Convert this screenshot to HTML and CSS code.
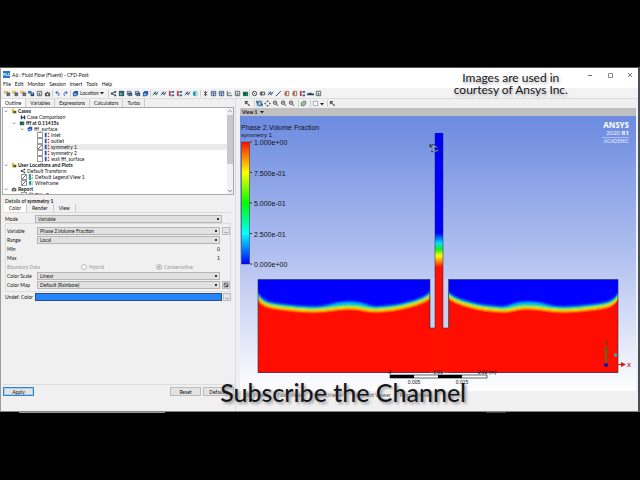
FILE: index.html
```html
<!DOCTYPE html>
<html lang="en">
<head>
<meta charset="utf-8">
<title>A6 : Fluid Flow (Fluent) - CFD-Post</title>
<link rel="stylesheet" href="styles.css">
</head>
<body>
<svg class="defs" aria-hidden="true">
  <symbol id="folder" viewBox="0 0 8 8"><path d="M1 1h3v2h3v4H1z" fill="#e5c34d"/><path d="M3 4h4v3H3z" fill="#4b5d38"/></symbol>
  <symbol id="save" viewBox="0 0 8 8"><path d="M0 1h5v3H0z" fill="#e3c158"/><path d="M3 3h4v4H3z" fill="#33518f"/><path d="M4 5h3v1H4z" fill="#e8a23c"/></symbol>
  <symbol id="copy" viewBox="0 0 8 8"><path d="M0 1h4v3H0z" fill="#3d79a8"/><path d="M3 3h4v4H3z" fill="#23406f"/><path d="M4 4h2v1H4z" fill="#dfe8f2"/></symbol>
  <symbol id="page" viewBox="0 0 8 8"><path d="M1.500 1.500h5v5h-5z" fill="#fff" stroke="#4e5860"/><path d="M3 3h2v3H3z" fill="#587a6a"/></symbol>
  <symbol id="camera" viewBox="0 0 8 8"><path d="M1 3h6v4H1zM3 2h2v1H3z" fill="#555"/><circle cx="4" cy="5" r="1" fill="#fff"/></symbol>
  <symbol id="undo" viewBox="0 0 8 8"><path d="M2 3h3q2 1 0 4M4 1L2 3l2 2" fill="none" stroke="#3464b8"/></symbol>
  <symbol id="redo" viewBox="0 0 8 8"><path d="M6 3H3Q1 4 3 7M4 1l2 2-2 2" fill="none" stroke="#3464b8"/></symbol>
  <symbol id="cube" viewBox="0 0 8 8"><path d="M1 3l2-2h4v4L5 7H1z" fill="#2458b5"/><path d="M2 4h3v2H2z" fill="#a9c4ef"/></symbol>
  <symbol id="share" viewBox="0 0 8 8"><path d="M6 2L2 4l4 2" fill="none" stroke="#28405a"/><path d="M1 3h2v2H1zM5 1h2v2H5zM5 5h2v2H5z" fill="#28405a"/></symbol>
  <symbol id="plane" viewBox="0 0 8 8"><path d="M1 1h6v6H1z" fill="#2a536e"/><path d="M2 3h3v3H2z" fill="#5cb596"/></symbol>
  <symbol id="layers" viewBox="0 0 8 8"><path d="M1 1h5v5H1z" fill="#4a72ae"/><path d="M3 3h4v4H3z" fill="#344759"/><path d="M2 2h3v1H2zM4 5h2v1H4z" fill="#dce7ef"/></symbol>
  <symbol id="vector" viewBox="0 0 8 8"><path d="M1 6l3-4 1 3 2-3M2 3l3 3" fill="none" stroke="#25466f"/></symbol>
  <symbol id="chart" viewBox="0 0 8 8"><path d="M1 1h2v6H1z" fill="#bb3b45"/><path d="M4 1h3v2H4zM4 5h3v2H4z" fill="#356291"/></symbol>
  <symbol id="ball" viewBox="0 0 8 8"><circle cx="4" cy="4" r="3" fill="#1b9999"/><path d="M4 1a3 3 0 0 1 0 6z" fill="#b9e5df"/></symbol>
  <symbol id="cross" viewBox="0 0 8 8"><path d="M2 2l4 4M6 2L2 6M4 1v6" stroke="#454545" fill="none"/></symbol>
  <symbol id="grid" viewBox="0 0 8 8"><path d="M1.500 1.500h5v5h-5zM1 3.500h6M4 3v4" stroke="#455d88" fill="#dce5f5"/></symbol>
  <symbol id="axes" viewBox="0 0 8 8"><path d="M1.500 1v5.500H7M2 5l2-2 2 1" stroke="#475160" fill="none"/></symbol>
  <symbol id="legend" viewBox="0 0 8 8"><path d="M1 0h3v8H1z" fill="#3f9a8b"/><path d="M5 1h2v1H5zM5 4h1v3H5z" fill="#567"/></symbol>
  <symbol id="picture" viewBox="0 0 8 8"><path d="M1 2h6v5H1z" fill="#1f7850"/><path d="M2 3h2v2H2z" fill="#143d45"/></symbol>
  <symbol id="clock" viewBox="0 0 8 8"><circle cx="4" cy="4" r="2.500" fill="#fff" stroke="#333"/><path d="M3 3l2 2" stroke="#333"/></symbol>
  <symbol id="film" viewBox="0 0 8 8"><path d="M1.500 2.500h5v3h-5z" fill="#fff" stroke="#333"/><path d="M3 2v4" stroke="#333"/></symbol>
  <symbol id="pen" viewBox="0 0 8 8"><path d="M1 7l5-5 1-1" stroke="#333" fill="none"/></symbol>
  <symbol id="probe" viewBox="0 0 8 8"><path d="M2.500 1.500h4v5h-4z" fill="#fff" stroke="#83684c"/><path d="M1 5l3-3 1 3z" fill="#ba4031"/></symbol>
  <symbol id="car" viewBox="0 0 8 8"><path d="M0 4h2V3h3v1h3v2H0z" fill="#283d65"/></symbol>
  <symbol id="pair" viewBox="0 0 8 8"><path d="M1 2h2v2h2V2h2v5H5V5H3v2H1z" fill="#263554"/></symbol>
  <symbol id="cursor" viewBox="0 0 8 8"><path d="M1 1h4L3.500 3 7 6 6 7 3 4 1 5z" fill="#555"/></symbol>
  <symbol id="rotate" viewBox="0 0 8 8"><path d="M6.500 3Q4 0 1.500 3M1 1v2.500h2M1.500 5Q4 8 6.500 5M7 7V4.500H5" stroke="#183750" fill="none"/></symbol>
  <symbol id="move" viewBox="0 0 8 8"><path d="M4 0l1.500 2h-3zM4 8l1.500-2h-3zM0 4l2-1.500v3zM8 4L6 2.500v3z" fill="#444"/></symbol>
  <symbol id="zoom" viewBox="0 0 8 8"><circle cx="3.500" cy="3" r="2" fill="#fff" stroke="#444"/><path d="M5 4.500L7 7M2.500 3h2" stroke="#444"/></symbol>
  <symbol id="box" viewBox="0 0 8 8"><path d="M1.500 3.500l2-2h3v3l-2 2h-3z" fill="#9fc1a4" stroke="#4b7d5a"/></symbol>
  <symbol id="empty" viewBox="0 0 8 8"><path d="M1.500 1.500h5v5h-5z" fill="#fff" stroke="#9a9cb4"/></symbol>
  <symbol id="bound" viewBox="0 0 8 8"><path d="M1 1h2.500v6H1z" fill="#2f56a3"/><path d="M5 1h2v2H5zM5 5h2v2H5z" fill="#b84a58"/></symbol>
  <symbol id="down" viewBox="0 0 8 8"><path d="M0 2h8L4 7z" fill="#222"/></symbol>
  <symbol id="chev" viewBox="0 0 8 8"><path d="M1 3l3 3 3-3" fill="none" stroke="#444"/></symbol>
  <symbol id="chevup" viewBox="0 0 8 8"><path d="M1 5l3-3 3 3" fill="none" stroke="#666"/></symbol>
</svg>

<main class="window">
  <header class="titlebar">
    <span class="logo">FLU</span>
    <h1>A6 : Fluid Flow (Fluent) - CFD-Post</h1>
    <div class="winbtns">
      <button aria-label="Minimize"><svg viewBox="0 0 8 8"><path d="M2 4.500h4" stroke="#777"/></svg></button>
      <button aria-label="Maximize"><svg viewBox="0 0 8 8"><path d="M2.500 2.500h4v4h-4z" fill="none" stroke="#888"/></svg></button>
      <button aria-label="Close"><svg viewBox="0 0 8 8"><path d="M2 2l4 4M6 2L2 6" stroke="#777"/></svg></button>
    </div>
  </header>
  <nav class="menu">
    <a href="#">File</a><a href="#">Edit</a><a href="#">Monitor</a><a href="#">Session</a><a href="#">Insert</a><a href="#">Tools</a><a href="#">Help</a>
  </nav>
  <div class="toolbar">
    <div class="tools"><svg><use href="#save"/></svg><svg><use href="#save"/></svg><svg><use href="#save"/></svg><svg><use href="#copy"/></svg><svg><use href="#page"/></svg><svg><use href="#camera"/></svg></div>
    <div class="tools"><svg><use href="#undo"/></svg><svg><use href="#redo"/></svg></div>
    <button class="location"><svg><use href="#cube"/></svg>Location<svg class="arrow"><use href="#down"/></svg></button>
    <div class="tools"><svg><use href="#share"/></svg><svg><use href="#plane"/></svg><svg><use href="#layers"/></svg><svg><use href="#layers"/></svg><svg><use href="#cube"/></svg></div>
    <div class="tools"><svg><use href="#vector"/></svg><svg><use href="#vector"/></svg><svg><use href="#chart"/></svg><svg><use href="#chart"/></svg><svg><use href="#vector"/></svg><svg><use href="#ball"/></svg></div>
    <div class="tools"><svg><use href="#cross"/></svg><svg><use href="#grid"/></svg><svg><use href="#grid"/></svg><svg><use href="#axes"/></svg><svg><use href="#page"/></svg><svg><use href="#picture"/></svg></div>
    <div class="tools"><svg><use href="#clock"/></svg><svg><use href="#film"/></svg><svg><use href="#vector"/></svg><svg><use href="#pen"/></svg><svg><use href="#probe"/></svg><svg><use href="#probe"/></svg><svg><use href="#chart"/></svg><svg><use href="#car"/></svg><svg><use href="#page"/></svg></div>
  </div>

  <div class="work">
    <section class="side">
      <div class="tabs maintabs">
        <button class="on">Outline</button><button>Variables</button><button>Expressions</button><button>Calculators</button><button>Turbo</button>
      </div>
      <div class="treebox">
        <ul class="tree">
          <li class="l0 bold"><svg><use href="#chev"/></svg><svg class="ic"><use href="#folder"/></svg>Cases</li>
          <li class="l1"><svg class="ic"><use href="#pair"/></svg>Case Comparison</li>
          <li class="l2 bold"><svg><use href="#chev"/></svg><svg class="ic"><use href="#picture"/></svg>fff at 0.11415s</li>
          <li class="l3"><svg><use href="#chev"/></svg><svg class="ic"><use href="#cube"/></svg>fff_surface</li>
          <li class="l4"><label><input type="checkbox"><svg><use href="#bound"/></svg>inlet</label></li>
          <li class="l4"><label><input type="checkbox"><svg><use href="#bound"/></svg>outlet</label></li>
          <li class="l4 sel"><label><input type="checkbox" checked><svg><use href="#bound"/></svg>symmetry 1</label></li>
          <li class="l4"><label><input type="checkbox"><svg><use href="#bound"/></svg>symmetry 2</label></li>
          <li class="l4"><label><input type="checkbox"><svg><use href="#bound"/></svg>wall fff_surface</label></li>
          <li class="l0 bold"><svg><use href="#chev"/></svg><svg class="ic"><use href="#folder"/></svg>User Locations and Plots</li>
          <li class="l1"><svg class="ic"><use href="#share"/></svg>Default Transform</li>
          <li class="l1"><label><input type="checkbox" checked><svg><use href="#legend"/></svg>Default Legend View 1</label></li>
          <li class="l1"><label><input type="checkbox" checked><svg><use href="#ball"/></svg>Wireframe</label></li>
          <li class="l0 bold"><svg><use href="#chev"/></svg><svg class="ic"><use href="#camera"/></svg>Report</li>
          <li class="l1"><label><input type="checkbox"><svg><use href="#page"/></svg>Title Page</label></li>
        </ul>
        <div class="scroll"><svg><use href="#chevup"/></svg><i></i><svg><use href="#chev"/></svg></div>
      </div>
      <h2>Details of <b>symmetry 1</b></h2>
      <div class="tabs subtabs"><button class="on">Color</button><button>Render</button><button>View</button></div>
      <form class="details">
        <div class="row outer"><label for="mode">Mode</label><select id="mode"><option>Variable</option></select></div>
        <div class="group">
          <div class="row"><label for="var">Variable</label><select id="var"><option>Phase 2.Volume Fraction</option></select><button type="button">...</button></div>
          <div class="row"><label for="range">Range</label><select id="range"><option>Local</option></select></div>
          <div class="row"><span>Min</span><output>0</output></div>
          <div class="row"><span>Max</span><output>1</output></div>
          <div class="row off"><span>Boundary Data</span><div class="radios"><label><input type="radio" name="b" disabled>Hybrid</label><label><input type="radio" name="b" checked disabled>Conservative</label></div></div>
          <div class="row"><label for="scale">Color Scale</label><select id="scale"><option>Linear</option></select></div>
          <div class="row"><label for="map">Color Map</label><select id="map"><option>Default (Rainbow)</option></select><button type="button" class="edit" aria-label="Edit color map"><svg viewBox="0 0 8 8"><path d="M1.500 1.500h5v5h-5zM2 2l4 4M4 6h2V4" fill="none" stroke="#333"/></svg></button></div>
        </div>
        <div class="row outer"><span>Undef. Color</span><button type="button" class="swatch" aria-label="Undefined color"></button><button type="button">...</button></div>
      </form>
      <footer class="actions"><button class="primary">Apply</button><button>Reset</button><button>Defaults</button></footer>
    </section>

    <section class="viewer">
      <div class="viewtools">
        <div class="tools"><svg><use href="#cursor"/></svg></div>
        <div class="tools"><svg class="active"><use href="#rotate"/></svg><svg><use href="#move"/></svg><svg><use href="#zoom"/></svg><svg><use href="#zoom"/></svg><svg><use href="#zoom"/></svg></div>
        <div class="tools"><svg><use href="#box"/></svg></div>
        <div class="tools"><svg><use href="#empty"/></svg><svg class="arrow"><use href="#down"/></svg></div>
        <div class="tools"><svg><use href="#cursor"/></svg></div>
      </div>
      <button class="viewname">View 1 <svg class="arrow"><use href="#down"/></svg></button>
      <svg class="scene" viewBox="0 0 396 275" role="img" aria-label="Phase 2 volume fraction on symmetry 1">
        <defs>
          <linearGradient id="sky" x2="0" y2="1"><stop offset="0" stop-color="#6b8be0"/><stop offset=".5" stop-color="#b0bfef"/><stop offset="1" stop-color="#fff"/></linearGradient>
          <linearGradient id="rainbow" x2="0" y2="1"><stop offset="0" stop-color="#f10"/><stop offset=".25" stop-color="#ff0"/><stop offset=".5" stop-color="#0f0"/><stop offset=".75" stop-color="#0ff"/><stop offset="1" stop-color="#00f"/></linearGradient>
          <linearGradient id="col" gradientUnits="userSpaceOnUse" x1="0" y1="117" x2="0" y2="151"><stop offset="0" stop-color="#00f"/><stop offset=".3" stop-color="#00e5f5"/><stop offset=".48" stop-color="#1bea20"/><stop offset=".67" stop-color="#ff0"/><stop offset="1" stop-color="#f10"/></linearGradient>
          <clipPath id="clip"><path d="M0 0h172v93H0z"/></clipPath>
          <filter id="soft" x="-5%" y="-5%" width="110%" height="110%"><feGaussianBlur stdDeviation=".8"/></filter>
          <path id="wave" d="M-5 8L0 16C3 22 10 25 20 26C35 28 45 29 57 29C70 29 78 26 91 26C104 26 108 29 118 29C135 28 145 26 155 23C165 20 170 17 172 15L177 8V110H-5z"/>
          <g id="pool">
            <path d="M0 0h172v93H0z" fill="#00f"/>
            <g clip-path="url(#clip)"><g filter="url(#soft)">
              <path d="M-5 6L0 13C3 20 10 23 20 24C35 26 45 27 57 27C70 27 76 22 91 22C106 22 108 26 118 27C135 26 145 24 155 21C165 18 170 15 172 12L177 6V110H-5z" fill="#0bf"/>
              <use href="#wave" y="-1" fill="#0d8"/>
              <use href="#wave" y="0" fill="#1d1"/>
              <use href="#wave" y="1" fill="#fe0"/>
              <use href="#wave" y="3" fill="#f10"/>
            </g></g>
            <path d="M0 93V0h172v49" fill="none" stroke="#234" stroke-width=".6"/>
          </g>
        </defs>
        <rect width="396" height="275" fill="url(#sky)"/>
        <path d="M18 212h360v44.500H18z" fill="#f10"/>
        <use href="#pool" x="18" y="163.500"/>
        <use href="#pool" transform="translate(378 163.500) scale(-.985 1)"/>
        <path d="M190 163h5v49h-5zM203 212v-49h5.500v49z" fill="#cbd1ef"/>
        <path d="M189.500 256V212h20v44z" fill="#f10"/>
        <path d="M195 17h8v196h-8z" fill="url(#col)"/>
        <path d="M18 256.500h360M190 163v49h5M203 212h5.500v-49" fill="none" stroke="#334" stroke-width=".6"/>
        <path d="M195 17v195M203 17v195" stroke="#225" stroke-width=".5"/>
        <text class="t8" x="1" y="14">Phase 2.Volume Fraction</text>
        <text class="t7" x="1" y="21">symmetry 1</text>
        <path d="M1.500 26h8v122h-8z" fill="url(#rainbow)" stroke="#333" stroke-width=".5"/>
        <path d="M10 26h2M10 56.500h2M10 87h2M10 117.500h2M10 148h2" stroke="#333"/>
        <g class="t8"><text x="14" y="29">1.000e+00</text><text x="14" y="60">7.500e-01</text><text x="14" y="90">5.000e-01</text><text x="14" y="121">2.500e-01</text><text x="14" y="151">0.000e+00</text></g>
        <g fill="none" stroke="#222" stroke-width=".9"><path d="M190 30q4-3 7 1M190 28v3h3M198 34q-3 3-7 1M199 37v-3h-3"/><path d="M192 31q4-2 5 1M193 35q3 1 5-1" stroke="#ddd" stroke-width=".7"/></g>
        <g text-anchor="end"><text class="brand" x="389" y="12">ANSYS</text><text class="release" x="389" y="19">2020 <tspan font-weight="700">R1</tspan></text><text class="academic" x="389" y="27">ACADEMIC</text></g>
        <path d="M362 21.500h27" stroke="#dfe7ff" stroke-width=".5"/>
        <path d="M150 259h97v3h-97z" fill="#fff" stroke="#000" stroke-width=".6"/><path d="M150 259h24v3h-24zM198 259h24v3h-24z"/>
        <g class="t5" text-anchor="middle"><text x="150" y="258">0</text><text x="198" y="258">0.01</text><text x="247" y="258">0.02 (m)</text><text x="174" y="268">0.005</text><text x="222" y="268">0.015</text></g>
        <path d="M366 248v-17" stroke="#577116" stroke-width="2"/><path d="M368 248.500h16" stroke="#e21b14"/><path d="M381 246l5 2.500-5 2.500z" fill="#d91820"/><circle cx="366" cy="249" r="2" fill="#1511a8"/><circle cx="366" cy="233" r="1.500" fill="#207f22"/><circle cx="375.500" cy="239" r="1.800" fill="#37aaa8"/>
        <text class="axis x" x="387" y="251">X</text><text class="axis y" x="364" y="229">Y</text>
      </svg>
      <div class="bottomtabs"><button>3D Viewer</button><button>Table Viewer</button><button>Chart Viewer</button><button>Comment Viewer</button><button>Report Viewer</button></div>
    </section>
  </div>
  <p class="credit">Images are used in<br>courtesy of Ansys Inc.</p>
  <p class="subscribe">Subscribe the Channel</p>
</main>
<div class="taskbar"><i></i><i></i></div>
</body>
</html>
```
FILE: styles.css
```css
* { box-sizing: border-box; }
body { margin: 0; padding-top: 67px; background: #000; color: #111; font: 5px/6px Lato, "Open Sans", sans-serif; }
button, select, input { margin: 0; padding: 0; font: inherit; color: inherit; border: 0; border-radius: 0; background: none; }
h1, h2, p, ul { margin: 0; padding: 0; font: inherit; }
a { color: inherit; text-decoration: none; }
svg { display: block; flex: none; width: 7px; height: 7px; }
.defs { position: absolute; width: 0; height: 0; }
.arrow { width: 4px; height: 4px; }

.window { position: relative; background: #f0f0f0; border: 1px solid #888; border-width: 1px 2px 1px 1px; border-color: #555 #46505c #8a8085 #999; }
.titlebar { display: flex; align-items: center; gap: 2px; height: 13px; padding-left: 2px; background: #fff; }
.logo { width: 7px; height: 7px; background: #2877c9; color: #fff; font: bold 4px/7px "Liberation Sans", sans-serif; text-align: center; }
.winbtns { display: flex; gap: 12px; margin-left: auto; padding-right: 4px; }
.winbtns svg { width: 8px; height: 8px; }
.menu { display: flex; gap: 4px; height: 7px; padding-left: 2px; background: #fff; }
.toolbar { display: flex; align-items: center; height: 11px; padding-left: 3px; background: #f3f3f3; border-bottom: 1px solid #ddd; }
.tools { display: flex; align-items: center; gap: 1px; }
.tools + .tools, .location, .location + .tools { border-left: 1px solid #ccc; padding-left: 1px; margin-left: 1px; }
.toolbar > .tools:last-child { margin-left: 0; }
.location { display: flex; align-items: center; gap: 1px; padding-right: 3px; }

.work { display: grid; grid-template-columns: 235fr 402fr; }
.side { display: flex; flex-direction: column; min-width: 0; border-right: 1px solid #d5dde8; }
.tabs { display: flex; height: 8px; }
.tabs button { padding: 0 5px; border-right: 1px solid #ccc; }
.maintabs button { padding: 0 4px; }
.tabs .on { background: #fff; }
.treebox { display: flex; height: 88px; margin: 0 1px; background: #fff; border: 1px solid #aaa; overflow: hidden; }
.tree { flex: 1; list-style: none; }
.tree li { display: flex; align-items: center; height: 6px; white-space: nowrap; }
.tree svg { width: 6px; height: 6px; }
.tree svg:first-child:not(.ic) { width: 4px; height: 4px; }
.tree .ic { margin: 0 1px 0 3px; }
.tree label { display: flex; align-items: center; gap: 1px; }
.tree .l0 { padding-left: 1px; }
.tree .l1 { padding-left: 14px; }
.tree .l1 > label { padding-left: 4px; }
.tree .l2 { padding-left: 9px; }
.tree .l3 { padding-left: 17px; }
.tree .l4 { margin-left: 34px; }
.tree .sel { background: #eaeaea; }
.tree .bold { font-weight: 700; }
input { appearance: none; width: 6px; height: 6px; background: #fff; border: 1px solid #999; }
input[type=checkbox]:checked { background: linear-gradient(135deg, #fff 45%, #666 45%, #666 60%, #fff 60%); }
input[type=radio] { border-radius: 50%; border-color: #bbb; }
input[type=radio]:checked { background: #999; box-shadow: inset 0 0 0 1px #fff; }
.scroll { display: flex; flex-direction: column; width: 6px; padding: 1px 0; background: #f0f0f0; }
.scroll svg, .scroll svg:first-child { width: 6px; height: 5px; }
.scroll i { height: 49px; margin: 1px 0 auto; background: #c9c9c9; }
h2 { height: 9px; padding: 3px 4px 0; }
.subtabs { margin: 0 3px; border-bottom: 1px solid #ddd; height: 9px; }

.details { padding: 1px 4px 0; }
.row { display: grid; grid-template-columns: 28px 1fr 8px; align-items: center; column-gap: 2px; height: 9px; white-space: nowrap; }
.row.outer { padding: 0; column-gap: 1px; grid-template-columns: 29px 1fr 8px; }
.group { padding: 2px 0 2px 1px; border: 1px solid #ddd; }
select { appearance: none; width: 100%; height: 8px; padding-left: 2px; border: 1px solid #b5b5b5; background: linear-gradient(#333, #333) right 2px center / 2px 2px no-repeat, #e1e1e1; }
.row > button { height: 8px; border: 1px solid #bbb; background: #e4e4e4; line-height: 4px; }
.row > .swatch { background: #2583fb; border-color: #244f92; }
.edit svg { width: 6px; height: 6px; }
output { text-align: right; }
.off { color: #999; }
.radios { display: grid; grid-template-columns: 54% 1fr; padding-left: 44px; }
.radios label { display: flex; align-items: center; gap: 2px; }
.actions { display: flex; gap: 2px; margin: auto 1px 15px 2px; padding-top: 2px; border-top: 1px solid #ddd; }
.actions button { width: 31px; height: 9px; border: 1px solid #bbb; background: #e3e3e3; }
.actions .primary { margin-right: auto; border: 1px solid #2b84cd; box-shadow: inset 0 0 0 1px #a9cfee; }

.viewer { min-width: 0; padding: 0 2px 0 4px; }
.viewtools { display: flex; align-items: center; gap: 2px; height: 9px; padding-left: 4px; }
.active { background: #b5d7f3; }
.viewname { display: flex; align-items: center; gap: 3px; width: 100%; height: 8px; padding-left: 2px; background: #c0c0c0; font-weight: 700; }
.scene { width: 100%; height: auto; }
.scene text { fill: #111; font-family: "Liberation Sans", sans-serif; }
.t8 text, .scene .t8 { font-size: 7px; }
.scene .t7 { font-size: 6px; }
.t5 text { font-size: 5px; }
.scene .brand { font: 700 8px "Open Sans", sans-serif; fill: #fff; }
.scene .release { font: 6px "Open Sans", sans-serif; fill: #fff; }
.scene .academic { font: 5px "Open Sans", sans-serif; fill: #e8edff; }
.scene .axis { font-size: 6px; font-weight: 700; }
.scene .x { fill: #c22; }
.scene .y { fill: #275d20; }
.bottomtabs { display: flex; gap: 9px; height: 20px; padding-left: 5px; color: #555; }
.bottomtabs button { height: 8px; }
.credit, .subscribe { position: absolute; white-space: nowrap; text-align: center; color: #16171c; font-family: Lato, sans-serif; }
.credit { right: 11%; top: 4px; font-size: 12px; line-height: 12px; text-shadow: 1px 2px 3px #aaa; }
.subscribe { left: 34.4%; bottom: 4px; font-size: 25px; font-weight: 500; line-height: 30px; text-shadow: 2px 2px 3px #999; }
.taskbar { display: flex; justify-content: space-between; height: 1px; padding: 0 21% 0 3%; }
.taskbar i { width: 30%; background: #999; }
.taskbar i + i { width: 4%; background: #444; }
```
